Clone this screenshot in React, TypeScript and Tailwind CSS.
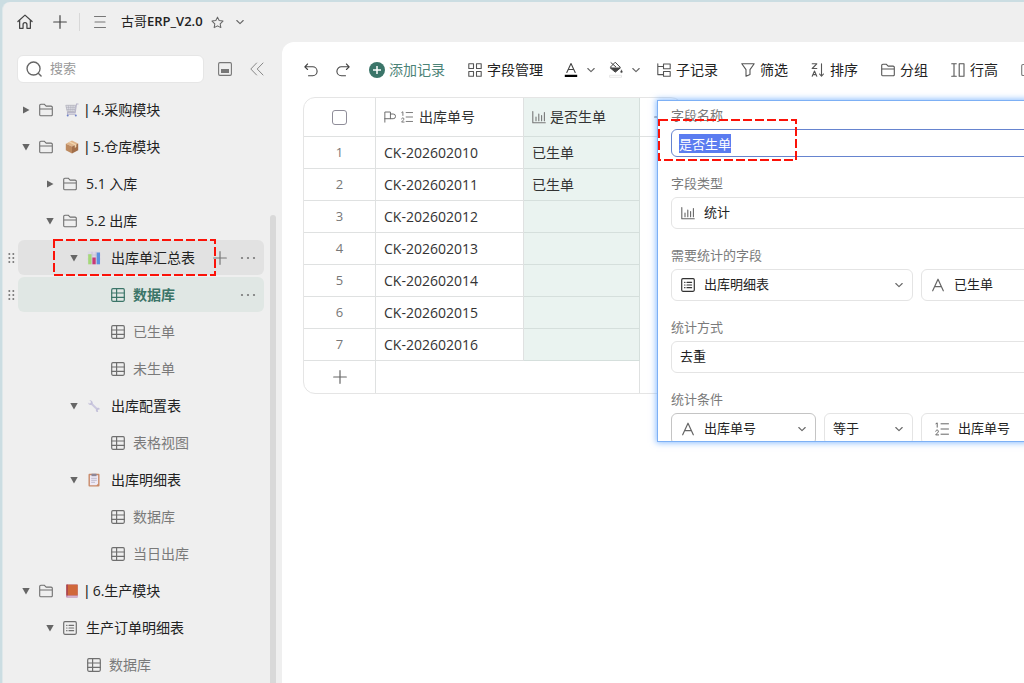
import React, { useEffect, useRef } from "react";

type IconProps = { className?: string };

function Svg({ className = "", size = "size-[14px]", sw = 1.1, children }: { className?: string; size?: string; sw?: number; children: React.ReactNode }) {
  return (
    <svg viewBox="0 0 14 14" className={`${size} shrink-0 ${className}`} fill="none" stroke="currentColor" strokeWidth={sw} strokeLinecap="round" strokeLinejoin="round" aria-hidden="true">
      {children}
    </svg>
  );
}

const HomeIcon = () => (
  <Svg size="size-4" sw={1.1}>
    <path d="M.8 6.600 7 1l6.200 5.600M2.300 5.500v7h3V9.300a1.700 1.700 0 0 1 3.400 0v3.200h3v-7" />
  </Svg>
);
const PlusIcon = ({ className }: IconProps) => (
  <Svg className={className} sw={1.2}>
    <path d="M7 .7v12.600M.7 7h12.600" />
  </Svg>
);
const MenuIcon = () => (
  <Svg>
    <path d="M1.500 1.500h11M2 7h10M1.500 12.500h11" />
  </Svg>
);
const StarIcon = () => (
  <Svg size="size-[13px]">
    <path d="m7 1.200 1.800 3.700 4.100.6-3 2.900.7 4.100L7 10.600l-3.600 1.900.7-4.100-3-2.900 4.100-.6z" />
  </Svg>
);
const ChevronDown = ({ className }: IconProps) => (
  <svg viewBox="0 0 8 8" className={`size-2 shrink-0 ${className ?? ""}`} fill="none" stroke="currentColor" strokeWidth="1.100" strokeLinecap="round" strokeLinejoin="round" aria-hidden="true">
    <path d="M.8 2.500 4 5.600l3.200-3.100" />
  </svg>
);
const SearchIcon = () => (
  <Svg size="size-4" sw={1.2}>
    <circle cx="6.600" cy="6.600" r="5.700" />
    <path d="m10.700 10.700 2.500 2.500" />
  </Svg>
);
const DockIcon = () => (
  <Svg>
    <rect x=".6" y=".6" width="12.800" height="12.800" rx="1.300" />
    <path d="M3 7h8v4H3z" fill="currentColor" stroke="none" />
  </Svg>
);
const CollapseIcon = () => (
  <Svg sw={1}>
    <path d="M6.600 1 .8 7l5.800 6M13 1 7.200 7l5.800 6" />
  </Svg>
);
const FolderIcon = ({ className }: IconProps) => (
  <Svg className={className}>
    <path d="M.7 11.700V2.400a1.200 1.200 0 0 1 1.200-1.200h3.300l1.900 1.900h5a1.200 1.200 0 0 1 1.200 1.200v7.400a1.100 1.100 0 0 1-1.200 1.100H1.900a1.200 1.200 0 0 1-1.200-1.100zM.7 6h12.600" />
  </Svg>
);
const GridIcon = ({ className }: IconProps) => (
  <Svg className={className} sw={1.2}>
    <rect x=".7" y=".7" width="12.600" height="12.600" rx="1.200" />
    <path d="M5.600.7v12.600M.7 5h12.600M.7 9.300h12.600" />
  </Svg>
);
const FormIcon = ({ className }: IconProps) => (
  <Svg className={className} sw={1.2}>
    <rect x=".7" y=".7" width="12.600" height="12.600" rx="1.200" />
    <path d="M3.600 4.300h.4M6 4.300h4.600M3.600 7h.4M6 7h4.600M3.600 9.700h.4M6 9.700h4.600" />
  </Svg>
);
const StatIcon = ({ className }: IconProps) => (
  <Svg className={className}>
    <path d="M.8 1.500v11.300h12.500M4 7v3.700M6.800 4v6.700M9.600 5.500v5.200M12.400 2.500v8.200" />
  </Svg>
);
const LetterAIcon = ({ className }: IconProps) => (
  <Svg className={className} sw={1.2}>
    <path d="M1.700 12.800 7 1.200l5.300 11.600M3.600 8.700h6.800" />
  </Svg>
);
const NumberListIcon = ({ className, size }: { className?: string; size?: string }) => (
  <Svg className={className} size={size} sw={1}>
    <path d="M.9 1.700 2.200.9v4.300M.7 9.200c.1-1.700 2.800-1.500 2.700.1 0 1-1.500 2-2.700 3.600h2.900M6 1.800h7.500M6 7h7.500M6 12.200h7.500" />
  </Svg>
);
const FlagIcon = ({ className }: IconProps) => (
  <Svg className={className} size="size-3">
    <path d="M1 13V1.200h6.500V9H1M7.500 3.500h3.200a2.300 2.300 0 0 1 0 5.500H7.500" />
  </Svg>
);

const CartEmoji = () => (
  <svg viewBox="0 0 14 14" className="size-[14px] shrink-0" fill="none" aria-hidden="true">
    <path d="M.8 2.300h9.800L9.800 8.500H2.300z" fill="#dcdce4" stroke="#adadb8" strokeWidth=".7" />
    <path d="M3.300 2.300 4 8.500M5.800 2.300v6.200M8.100 2.300l-.3 6.200M1.200 4.400h9M1.600 6.500h8.500" stroke="#a8a8b5" strokeWidth=".5" />
    <path d="M13.500 1h-2l-1.300 8.600H2.500v1.700h8" stroke="#b8b5c9" strokeWidth="1.100" />
    <circle cx="2.700" cy="12.500" r="1" fill="#6f82c9" />
    <circle cx="10.800" cy="12.500" r="1" fill="#6f82c9" />
  </svg>
);
const BoxEmoji = () => (
  <svg viewBox="0 0 14 14" className="size-[14px] shrink-0" aria-hidden="true">
    <path d="M.8 3.700 7 .5l6.200 3L7 6.600z" fill="#dfb58b" />
    <path d="M.8 3.700 7 6.600v7L.8 10.300z" fill="#bd8a60" />
    <path d="m7 6.600 6.200-3.100v6.800L7 13.600z" fill="#a26f4a" />
    <path d="m3.700 2.200 6.100 3v2.700l1.500-.8V4.500L5.200 1.500z" fill="#f1d4ad" />
  </svg>
);
const ChartEmoji = () => (
  <svg viewBox="0 0 14 14" className="size-[14px] shrink-0" aria-hidden="true">
    <rect x=".7" y=".7" width="12.600" height="12.600" rx=".8" fill="#dcd8e6" />
    <path d="M.7 4h12.600M.7 8h12.600M5 .7v12.600M9 .7v12.600" stroke="#bbb5ca" strokeWidth=".5" />
    <path d="M1.200 3.200h3.300v10.100H1.200z" fill="#a5d977" />
    <path d="M5.400 6.500h3.300v6.800H5.400z" fill="#c93a76" />
    <path d="M9.700 1.500H13v11.800H9.700z" fill="#5b92e0" />
  </svg>
);
const WrenchEmoji = () => (
  <svg viewBox="0 0 14 14" className="size-[14px] shrink-0" fill="none" aria-hidden="true">
    <path d="m4 4.200 6.200 6" stroke="#cbc8df" strokeWidth="2" />
    <path d="M2.400 1.300 4 2.700 3.500 4.200l-1.700.3L.9 3.300c.1 1.700 1.300 3 3.100 2.700l1.700-1.500C6 2.600 4.600 1 2.400 1.300zM12.900 10.300l-1.300.1-.9 1 .5 1.700c-1.700.1-2.700-1.200-2.300-2.700l1.600-1.600c1.300-.2 2.300.4 2.400 1.500z" fill="#c4c1da" />
  </svg>
);
const ClipboardEmoji = () => (
  <svg viewBox="0 0 14 14" className="size-[14px] shrink-0" aria-hidden="true">
    <rect x="1.500" y=".8" width="11" height="12.700" rx=".9" fill="#c98a68" />
    <path d="M2.900 2.300h8.200v8.500L9.500 12.300H2.900z" fill="#eeeaf6" />
    <path d="M4.500.7h5v2.500h-5z" fill="#8c8799" />
    <path d="M4.200 5.300h5.600M4.200 7.300h5.600M4.200 9.300h3.800" stroke="#aaa5bb" strokeWidth=".7" />
  </svg>
);
const BookEmoji = () => (
  <svg viewBox="0 0 14 14" className="size-[14px] shrink-0" aria-hidden="true">
    <rect x="1.300" y=".6" width="11.400" height="12.900" rx=".6" fill="#b574a5" />
    <path d="M2.600.6h10.100v10.900H2.600z" fill="#d0683a" />
    <path d="M1.300.6h1.600v11H1.300z" fill="#ad4444" />
    <path d="M2.300 11.800h10.400v.9H2.300z" fill="#e3cfe3" />
  </svg>
);

type Row = {
  level: number;
  label: string;
  arrow?: "right" | "down";
  icon?: React.ReactNode;
  emoji?: React.ReactNode;
  state?: "hover" | "active";
};

const rows: Row[] = [
  { level: 0, label: "4.采购模块", arrow: "right", icon: <FolderIcon />, emoji: <CartEmoji /> },
  { level: 0, label: "5.仓库模块", arrow: "down", icon: <FolderIcon />, emoji: <BoxEmoji /> },
  { level: 1, label: "5.1 入库", arrow: "right", icon: <FolderIcon /> },
  { level: 1, label: "5.2 出库", arrow: "down", icon: <FolderIcon /> },
  { level: 2, label: "出库单汇总表", arrow: "down", emoji: <ChartEmoji />, state: "hover" },
  { level: 3, label: "数据库", icon: <GridIcon />, state: "active" },
  { level: 3, label: "已生单", icon: <GridIcon /> },
  { level: 3, label: "未生单", icon: <GridIcon /> },
  { level: 2, label: "出库配置表", arrow: "down", emoji: <WrenchEmoji /> },
  { level: 3, label: "表格视图", icon: <GridIcon /> },
  { level: 2, label: "出库明细表", arrow: "down", emoji: <ClipboardEmoji /> },
  { level: 3, label: "数据库", icon: <GridIcon /> },
  { level: 3, label: "当日出库", icon: <GridIcon /> },
  { level: 0, label: "6.生产模块", arrow: "down", icon: <FolderIcon />, emoji: <BookEmoji /> },
  { level: 1, label: "生产订单明细表", arrow: "down", icon: <FormIcon /> },
  { level: 2, label: "数据库", icon: <GridIcon /> },
];

const indents = ["pl-0", "pl-6", "pl-12", "pl-[72px]"];

function Dots() {
  return (
    <svg viewBox="0 0 16 4" className="h-1 w-4" fill="currentColor" aria-hidden="true">
      <circle cx="2" cy="2" r="1.100" />
      <circle cx="8" cy="2" r="1.100" />
      <circle cx="14" cy="2" r="1.100" />
    </svg>
  );
}

function DashedFrame({ className }: { className: string }) {
  return (
    <svg className={`pointer-events-none absolute overflow-visible ${className}`} aria-hidden="true">
      <rect width="100%" height="100%" fill="none" stroke="#fb1208" strokeWidth="2" strokeDasharray="9 3" />
    </svg>
  );
}

function TreeRow({ row }: { row: Row }) {
  const leaf = !row.arrow;
  const bg = row.state === "hover" ? "bg-[#e2e2e2]" : row.state === "active" ? "bg-[#e0e7e4]" : "";
  const tone = row.state === "active" ? "font-bold text-[#3b7568]" : leaf ? "text-[#7a7a7a]" : "text-[#222]";
  const iconTone = row.state === "active" ? "text-[#3b7568]" : "text-[#6f6f6f]";
  return (
    <li className="relative flex h-[35px] items-center">
      <span className="flex w-[15px] shrink-0 pl-[5px] text-[#777]">
        {row.state && (
          <svg viewBox="0 0 8 12" className="h-3 w-2" fill="currentColor" aria-hidden="true">
            {[2, 6, 10].map((y) => (
              <React.Fragment key={y}>
                <circle cx="1.300" cy={y} r="1" />
                <circle cx="5.300" cy={y} r="1" />
              </React.Fragment>
            ))}
          </svg>
        )}
      </span>
      <div className={`flex h-full flex-1 items-center rounded-md pr-2 ${bg}`}>
        <button type="button" className={`flex h-full flex-1 items-center text-left text-sm whitespace-nowrap ${indents[row.level]} ${tone}`}>
          <span className="mr-[5px] flex w-4 justify-center text-[#666]">
            {row.arrow && (
              <svg viewBox="0 0 8 8" className="size-2" fill="currentColor" aria-hidden="true">
                <path d={row.arrow === "down" ? "M.3 1h7.400L4 7.500z" : "M1 .5v7L7.500 4z"} />
              </svg>
            )}
          </span>
          {row.icon && <span className={row.emoji ? `mr-3 ${iconTone}` : leaf ? `mr-2 ${iconTone}` : `mr-[9px] ${iconTone}`}>{row.icon}</span>}
          {row.emoji && <span className={row.icon ? "mr-[6px]" : "mr-[10px]"}>{row.emoji}</span>}
          {row.icon && row.emoji && <span className="mr-1 font-['Liberation_Sans']">|</span>}
          {row.label}
        </button>
        {row.state && (
          <span className="flex items-center gap-[13px] text-[#777]">
            {row.state === "hover" && (
              <button type="button" aria-label="新增">
                <PlusIcon />
              </button>
            )}
            <button type="button" aria-label="更多">
              <Dots />
            </button>
          </span>
        )}
      </div>
      {row.state === "hover" && <DashedFrame className="left-[51px] top-0 h-[35px] w-[161px]" />}
    </li>
  );
}

function Sidebar() {
  return (
    <aside className="flex w-[279px] shrink-0 flex-col">
      <div className="flex items-center pt-[13px] pl-[14px]">
        <label className="flex h-7 w-[187px] items-center rounded-md border border-[#e6e6e6] bg-white pl-[8px] text-[#666]">
          <SearchIcon />
          <input type="search" aria-label="搜索" placeholder="搜索" className="ml-2 w-32 text-[13px] text-[#333] outline-none placeholder:text-[#999]" />
        </label>
        <button type="button" aria-label="停靠" className="ml-[14px] text-[#777]">
          <DockIcon />
        </button>
        <button type="button" aria-label="收起" className="ml-[18px] text-[#888]">
          <CollapseIcon />
        </button>
      </div>
      <div className="flex min-h-0 flex-1 overflow-hidden">
        <ul className="mt-[9px] flex w-[261px] shrink-0 flex-col gap-[2px]">
          {rows.map((row, i) => (
            <TreeRow key={i} row={row} />
          ))}
        </ul>
        <div className="mt-[132px] ml-[6px] w-[6px] rounded-t-full bg-[#d9d9d9]" />
      </div>
    </aside>
  );
}

function Tool({ icon, label }: { icon: React.ReactNode; label: string }) {
  return (
    <button type="button" className="flex shrink-0 items-center gap-[5px] text-sm whitespace-nowrap text-[#222]">
      {icon}
      {label}
    </button>
  );
}

function Toolbar() {
  return (
    <div className="flex h-[55px] items-center overflow-hidden pl-[22px] text-[#444]">
      <button type="button" aria-label="撤销">
        <Svg>
          <path d="M3.600 1 .8 3.800l2.800 2.700M.8 3.800h7.800a4.500 4.500 0 0 1 0 9H4.500" />
        </Svg>
      </button>
      <button type="button" aria-label="重做" className="ml-[18px]">
        <Svg>
          <path d="m10.400 1 2.800 2.800-2.800 2.700M13.200 3.800H5.400a4.500 4.500 0 0 0 0 9h4.100" />
        </Svg>
      </button>
      <button type="button" className="ml-[19px] flex shrink-0 items-center gap-1 text-sm whitespace-nowrap text-[#4c8377]">
        <svg viewBox="0 0 16 16" className="size-4" aria-hidden="true">
          <circle cx="8" cy="8" r="8" fill="#3b7569" />
          <path d="M8 4v8M4 8h8" stroke="#fff" strokeWidth="1.500" />
        </svg>
        添加记录
      </button>
      <div className="ml-[23px] flex">
        <Tool
          label="字段管理"
          icon={
            <Svg className="text-[#555]">
              <path d="M.8.8h4.700v4.700H.8zM8.500.8h4.700v4.700H8.500zM.8 8.500h4.700v4.700H.8zM8.500 8.500h4.700v4.700H8.500z" />
            </Svg>
          }
        />
      </div>
      <button type="button" aria-label="文字颜色" className="ml-[21px] flex items-center gap-[9px]">
        <Svg>
          <path d="M2.800 9.500 7 .6l4.200 8.900M4.300 6.500h5.400" />
          <path d="M.8 11.700h12.400v2.300H.8z" fill="#000" stroke="none" />
        </Svg>
        <ChevronDown className="text-[#666]" />
      </button>
      <button type="button" aria-label="填充颜色" className="ml-[14px] flex items-center gap-[9px]">
        <Svg className="overflow-visible" sw={1}>
          <path d="m6.500-.5 4.800 4.900-4.800 4.400-4.800-4.400zM2-.3l4.700 4" />
          <path d="M1.700 5h9.600L6.500 8.800z" fill="currentColor" />
          <path d="M12.500 7.200c1.300 1.700 1 2.400 0 2.400s-1.300-.7 0-2.400z" fill="currentColor" strokeWidth=".5" />
          <path d="M1 12.300h11.500v2H1z" fill="#fff" stroke="#ddd" strokeWidth=".7" />
        </Svg>
        <ChevronDown className="text-[#666]" />
      </button>
      <div className="ml-[17px] flex gap-[23px]">
        <Tool
          label="子记录"
          icon={
            <Svg className="text-[#555]">
              <path d="M.8.7v10.900h5.700M.8 3.500h5.700M6.500 1h6.700v4.700H6.500zM6.500 8.500h6.700v4.700H6.500z" />
            </Svg>
          }
        />
        <Tool
          label="筛选"
          icon={
            <Svg className="text-[#555]">
              <path d="M.8.8h12.400L9 6.600v5L5 13.300V6.600z" />
            </Svg>
          }
        />
        <Tool
          label="排序"
          icon={
            <Svg className="text-[#555]">
              <path d="M1.200.8h4.600L1.200 5.500h4.600M1.200 13.200 3.500 8l2.300 5.200M2 11.600h3M10.500.8v12M8.500 11l2 2.200 2-2.200" />
            </Svg>
          }
        />
        <Tool label="分组" icon={<FolderIcon className="text-[#555]" />} />
        <Tool
          label="行高"
          icon={
            <Svg className="text-[#555]">
              <path d="M.7.8h4.600M.7 13.200h4.600M3 .8v12.400M8.200.8h4.800v12.400H8.200z" />
            </Svg>
          }
        />
        <button type="button" aria-label="更多工具" className="shrink-0 text-[#777]">
          <Svg>
            <path d="M2 1.500h10a1.300 1.300 0 0 1 1.300 1.300v8.400a1.300 1.300 0 0 1-1.300 1.300H2a1.300 1.300 0 0 1-1.300-1.300V2.800A1.300 1.300 0 0 1 2 1.500zM3.500 5h7" />
          </Svg>
        </button>
      </div>
    </div>
  );
}

const records = [
  ["CK-202602010", "已生单"],
  ["CK-202602011", "已生单"],
  ["CK-202602012", ""],
  ["CK-202602013", ""],
  ["CK-202602014", ""],
  ["CK-202602015", ""],
  ["CK-202602016", ""],
];

function DataTable() {
  return (
    <div className="w-[380px] overflow-hidden rounded-xl border border-[#e5e5e5]">
      <table className="w-full table-fixed border-separate border-spacing-0 text-left text-sm text-[#333]">
        <colgroup>
          <col className="w-[72px]" />
          <col className="w-[148px]" />
          <col className="w-[116px]" />
          <col />
        </colgroup>
        <thead>
          <tr className="h-[39px]">
            <th className="border-r border-b border-[#dfe1e1] p-0 align-middle">
              <input type="checkbox" aria-label="全选" className="mx-auto block size-[15px] appearance-none rounded-[3px] border border-[#8f8d99] bg-white" />
            </th>
            <th className="border-r border-b border-[#dfe1e1] p-0 pl-2 font-normal">
              <span className="flex items-center">
                <FlagIcon className="mr-[5px] text-[#666]" />
                <NumberListIcon size="size-3" className="mr-[6px] text-[#666]" />
                出库单号
              </span>
            </th>
            <th className="border-r border-b border-[#d5dfdc] bg-[#eaf3f0] p-0 pl-2 font-normal">
              <span className="flex items-center gap-1">
                <StatIcon className="text-[#777]" />
                是否生单
              </span>
            </th>
            <th className="border-b border-[#dfe1e1] p-0">
              <button type="button" aria-label="新增字段" className="mx-auto flex text-[#666]">
                <PlusIcon />
              </button>
            </th>
          </tr>
        </thead>
        <tbody>
          {records.map(([code, flag], i) => (
            <tr key={code} className="h-8">
              <td className="border-r border-b border-[#dfe1e1] p-0 text-center text-[13px] text-[#777]">{i + 1}</td>
              <td className="border-r border-b border-[#dfe1e1] p-0 pl-2">{code}</td>
              <td className="border-r border-b border-[#d5dfdc] bg-[#eaf3f0] p-0 pl-2">{flag}</td>
              {i === 0 && <td rowSpan={8} />}
            </tr>
          ))}
          <tr className="h-8">
            <td className="border-r border-[#dfe1e1] p-0">
              <button type="button" aria-label="新增行" className="mx-auto flex text-[#666]">
                <PlusIcon />
              </button>
            </td>
            <td colSpan={2} className="border-r border-[#dfe1e1] p-0" />
          </tr>
        </tbody>
      </table>
    </div>
  );
}

function Picker({ id, label, value, icon, strong }: { id: string; label?: string; value: string; icon?: React.ReactNode; strong?: boolean }) {
  return (
    <div className={`flex h-8 items-center rounded-md border pr-[9px] pl-2 ${strong ? "border-[#c4c4c4]" : "border-[#e4e4e4]"}`}>
      {icon && <span className="mr-[9px] ml-px text-[#666]">{icon}</span>}
      <select id={id} aria-label={label} className="min-w-0 flex-1 appearance-none bg-transparent text-[13px] text-[#222] outline-none">
        <option>{value}</option>
      </select>
      <ChevronDown className="pointer-events-none text-[#666]" />
    </div>
  );
}

const labelClass = "mb-1 block h-5 text-[13px] leading-5 text-[#7a7a7a]";

function FieldPanel() {
  const nameRef = useRef<HTMLInputElement>(null);
  useEffect(() => {
    nameRef.current?.focus({ preventScroll: true });
    nameRef.current?.select();
  }, []);
  return (
    <section aria-label="字段设置" className="absolute top-[58px] -right-1 left-[375px] h-[342px] border border-[#7db0f5] bg-white shadow-[0_0_6px_1px_rgba(80,155,255,0.65)]">
      <div className="h-full overflow-clip">
        <form className="flex w-[505px] flex-col gap-4 pt-1 pl-[13px]">
          <div>
            <label htmlFor="field-name" className={labelClass}>
              字段名称
            </label>
            <input
              ref={nameRef}
              id="field-name"
              defaultValue="是否生单"
              className="block h-7 w-full rounded-md border border-[#6684cf] px-[7px] text-[13px] leading-[22px] caret-transparent outline-none selection:bg-[#5b7cf0] selection:text-white"
            />
          </div>
          <div>
            <label htmlFor="field-type" className={labelClass}>
              字段类型
            </label>
            <Picker id="field-type" value="统计" icon={<StatIcon />} />
          </div>
          <div>
            <label htmlFor="source-table" className={labelClass}>
              需要统计的字段
            </label>
            <div className="grid grid-cols-2 gap-2">
              <Picker id="source-table" value="出库明细表" icon={<FormIcon className="text-[#333]" />} />
              <Picker id="source-field" label="统计字段" value="已生单" icon={<LetterAIcon />} />
            </div>
          </div>
          <div>
            <label htmlFor="method" className={labelClass}>
              统计方式
            </label>
            <Picker id="method" value="去重" />
          </div>
          <div>
            <label htmlFor="cond-field" className={labelClass}>
              统计条件
            </label>
            <div className="grid grid-cols-[145px_89px_1fr] gap-2">
              <Picker id="cond-field" value="出库单号" icon={<LetterAIcon />} strong />
              <Picker id="cond-op" label="条件" value="等于" />
              <Picker id="cond-value" label="条件值" value="出库单号" icon={<NumberListIcon className="ml-1" />} />
            </div>
          </div>
        </form>
      </div>
      <DashedFrame className="top-[19px] left-px h-[40px] w-[137px]" />
    </section>
  );
}

export default function App() {
  return (
    <div className="h-screen overflow-hidden bg-[#cbdde2] pt-[2px] pl-[2px] font-['Open_Sans','Noto_Sans_CJK_SC',sans-serif]">
      <div className="flex h-full flex-col overflow-hidden rounded-tl-lg border-l border-[#dfe8ea] bg-[#efefef]">
        <header className="flex h-10 shrink-0 items-center pl-[14px] text-[#444]">
          <button type="button" aria-label="首页">
            <HomeIcon />
          </button>
          <button type="button" aria-label="新建" className="ml-5">
            <PlusIcon />
          </button>
          <span className="ml-3 h-[18px] w-px bg-[#d8d8d8]" />
          <button type="button" aria-label="菜单" className="ml-[13px] text-[#777]">
            <MenuIcon />
          </button>
          <h1 className="ml-[14px] text-[13px] text-[#222]">
            古哥<span className="font-semibold">ERP_V2.0</span>
          </h1>
          <button type="button" aria-label="收藏" className="ml-[8px] text-[#666]">
            <StarIcon />
          </button>
          <button type="button" aria-label="展开" className="ml-[12px] text-[#666]">
            <ChevronDown />
          </button>
        </header>
        <div className="flex min-h-0 flex-1">
          <Sidebar />
          <main className="relative min-w-0 flex-1 overflow-clip rounded-tl-xl bg-white">
            <Toolbar />
            <div className="pl-[21px]">
              <DataTable />
            </div>
            <FieldPanel />
          </main>
        </div>
      </div>
    </div>
  );
}
